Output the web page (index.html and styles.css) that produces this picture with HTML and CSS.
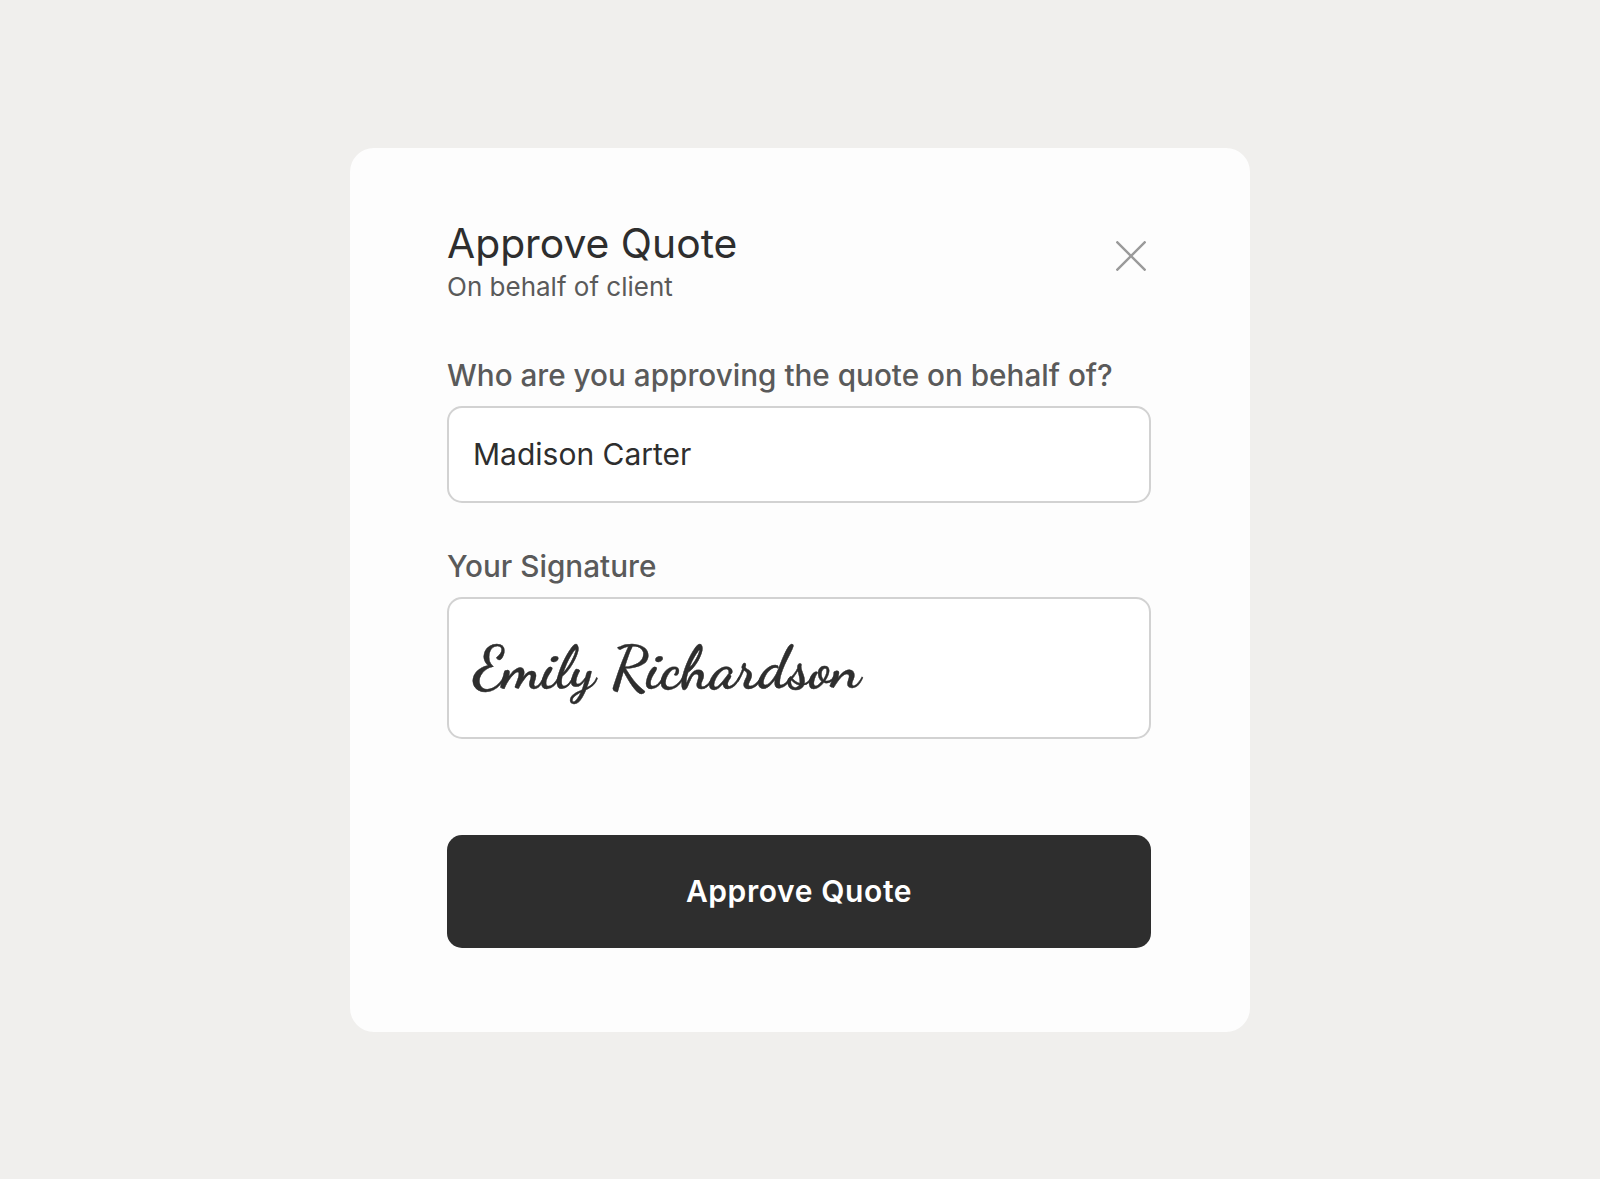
FILE: index.html
```html
<!DOCTYPE html>
<html lang="en">
<head>
<meta charset="utf-8">
<title>Approve Quote</title>
<link rel="stylesheet" href="styles.css">
</head>
<body>
<main class="card">
  <header class="head">
    <div class="head-text">
      <h1 class="title">Approve Quote</h1>
      <p class="subtitle">On behalf of client</p>
    </div>
    <button class="close" type="button" aria-label="Close">
      <svg class="close-icon" viewBox="0 0 30 30" width="30" height="30" aria-hidden="true"><path d="M0.5 0.5 29.5 29.5M29.5 0.5 0.5 29.5"/></svg>
    </button>
  </header>
  <section class="field field-name">
    <div class="label">Who are you approving the quote on behalf of?</div>
    <div class="box box-name">Madison Carter</div>
  </section>
  <section class="field field-sign">
    <div class="label">Your Signature</div>
    <div class="box box-sign"><span class="signature">Emily Richardson</span></div>
  </section>
  <button class="submit" type="button">Approve Quote</button>
</main>
</body>
</html>
```
FILE: styles.css
```css
* { box-sizing: border-box; }
html, body { height: 100%; }
body {
  margin: 0;
  background: #f0efed;
  font-family: Inter, "Liberation Sans", sans-serif;
  display: flex;
  align-items: center;
  justify-content: center;
}
.card {
  width: 900px;
  height: 884px;
  background: #fdfdfd;
  border-radius: 24px;
  padding: 70px 99px 84px 97px;
  display: flex;
  flex-direction: column;
}
.head { display: flex; justify-content: space-between; align-items: flex-start; }
.title { margin: 0; font-size: 40.8px; line-height: 50px; font-weight: 400; color: #2e2e2e; }
.subtitle { margin: 2px 0 0; font-size: 26px; line-height: 34px; color: #5a5a5a; }
.close {
  margin: 23px 5px 0 0;
  padding: 0;
  border: 0;
  background: none;
  line-height: 0;
}
.close-icon { stroke: #9a9a9a; stroke-width: 2.4; fill: none; }
.field-name { margin-top: 48px; }
.field-sign { margin-top: 40px; }
.label { font-size: 29.7px; line-height: 46px; font-weight: 500; color: #5a5a5a; }
.box {
  margin-top: 8px;
  border: 2px solid #d2d2d2;
  border-radius: 15px;
  background: #fff;
  padding: 0 24px;
  display: flex;
  align-items: center;
  color: #2e2e2e;
}
.box-name { height: 97px; font-size: 30px; }
.box-sign { height: 142px; }
.signature { font-family: "Dancing Script", cursive; font-size: 60px; font-weight: 700; -webkit-text-stroke: 0.4px #2e2e2e; }
.submit {
  margin-top: auto;
  height: 113px;
  width: 100%;
  border: 0;
  border-radius: 15px;
  background: #2e2e2e;
  color: #fff;
  font-family: inherit;
  font-size: 30px;
  font-weight: 600;
  letter-spacing: 0.6px;
}
```
